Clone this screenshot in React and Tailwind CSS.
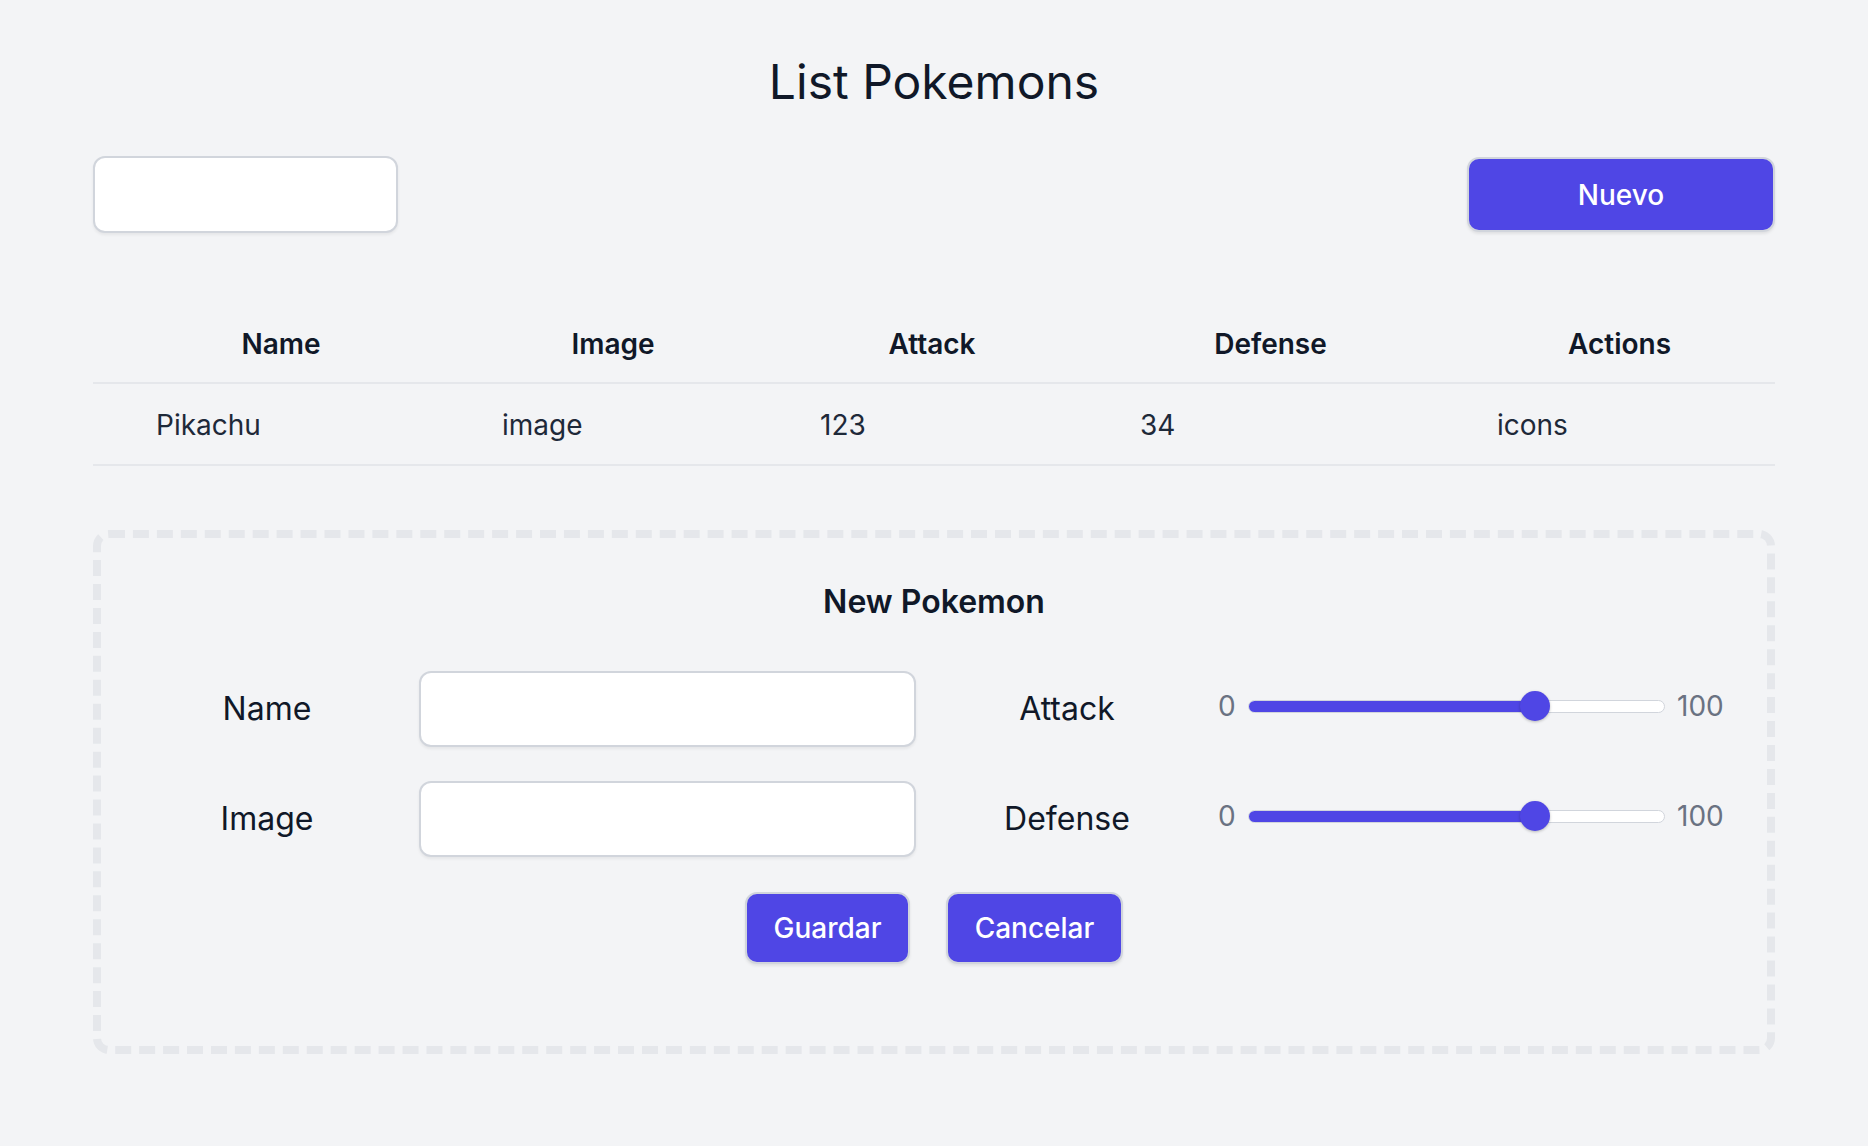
import React, { useState } from 'react';

const pokemons = [
    { name: 'Pikachu', image: 'image', attack: 123, defense: 34, actions: 'icons' }
];

const columns = ['Name', 'Image', 'Attack', 'Defense', 'Actions'];

const RangeField = ( { label, value } ) => (
    <div className="flex items-center">
        <div className="w-[302px] text-center text-[32px] leading-[40px] text-gray-900">{label}</div>
        {/* slider sits a touch above the label line */}
        <div className="mb-[6px] flex items-center">
            <span className="w-[30px] text-[28px] leading-[40px] text-gray-500">0</span>
            <div className="relative h-[13px] w-[417px] rounded-full border border-gray-300 bg-white">
                <div className="h-full rounded-full bg-[#4f46e5]" style={{ width: `${value}%` }}></div>
                <div
                    className="absolute top-1/2 h-[30px] w-[30px] -translate-x-1/2 -translate-y-1/2 rounded-full bg-[#4f46e5] shadow-[0_1px_3px_rgba(0,0,0,0.25)]"
                    style={{ left: `${value}%` }}
                ></div>
            </div>
            <span className="ml-[12px] text-[28px] leading-[40px] text-gray-500">100</span>
        </div>
    </div>
);

const App = () => {
    const [search, setSearch] = useState( '' );
    const [form, setForm] = useState( { name: '', image: '', attack: 69, defense: 69 } );

    const handleChange = ( field, value ) => {
        setForm( prev => ( { ...prev, [field]: value } ) );
    };

    return (
        <div className="min-h-screen w-full bg-gray-100 px-[93px] pt-[50px] pb-[80px] font-['Inter',sans-serif] text-gray-900">
            {/* Title */}
            <h1 className="text-center text-[48px] leading-[64px] font-normal text-gray-900">List Pokemons</h1>

            {/* Search + Nuevo */}
            <div className="mt-[42px] flex items-center justify-between">
                <input
                    type="text"
                    value={search}
                    onChange={( e ) => setSearch( e.target.value )}
                    className="h-[77px] w-[305px] rounded-[12px] border-2 border-gray-300 bg-white px-4 text-[28px] shadow-[0_2px_3px_rgba(0,0,0,0.06)] outline-none"
                />
                <button className="h-[75px] w-[308px] rounded-[12px] border-2 border-gray-300 bg-[#4f46e5] text-[28px] font-medium text-white shadow-[0_2px_3px_rgba(0,0,0,0.08)]">
                    Nuevo
                </button>
            </div>

            {/* Table */}
            <div className="mt-[73px]">
                <div className="grid h-[78px] grid-cols-[346px_318px_320px_357px_341px] items-center border-b-2 border-gray-200">
                    {columns.map( col => (
                        <div key={col} className="pl-[30px] text-center text-[28px] leading-[40px] font-semibold">{col}</div>
                    ) )}
                </div>
                {pokemons.map( p => (
                    <div key={p.name} className="grid h-[82px] grid-cols-[346px_318px_320px_357px_341px] items-center border-b-2 border-gray-200 pt-[2px] text-[28px] leading-[40px] text-gray-800">
                        <div className="pl-[63px]">{p.name}</div>
                        <div className="pl-[63px]">{p.image}</div>
                        <div className="pl-[63px]">{p.attack}</div>
                        <div className="pl-[63px]">{p.defense}</div>
                        <div className="pl-[63px]">{p.actions}</div>
                    </div>
                ) )}
            </div>

            {/* New Pokemon form */}
            <div className="mt-[64px] rounded-[16px] border-[8px] border-dashed border-gray-200 pt-[44px] pb-[82px]">
                <h2 className="text-center text-[32px] leading-[40px] font-semibold">New Pokemon</h2>

                <div className="mt-[49px] flex flex-col gap-[34px]">
                    <div className="flex items-center">
                        <div className="w-[318px] pl-[14px] text-center text-[32px] leading-[40px]">Name</div>
                        <input
                            type="text"
                            value={form.name}
                            onChange={( e ) => handleChange( 'name', e.target.value )}
                            className="h-[76px] w-[497px] rounded-[12px] border-2 border-gray-300 bg-white px-4 text-[28px] shadow-[0_2px_3px_rgba(0,0,0,0.06)] outline-none"
                        />
                        <RangeField label="Attack" value={form.attack} />
                    </div>
                    <div className="flex items-center">
                        <div className="w-[318px] pl-[14px] text-center text-[32px] leading-[40px]">Image</div>
                        <input
                            type="text"
                            value={form.image}
                            onChange={( e ) => handleChange( 'image', e.target.value )}
                            className="h-[76px] w-[497px] rounded-[12px] border-2 border-gray-300 bg-white px-4 text-[28px] shadow-[0_2px_3px_rgba(0,0,0,0.06)] outline-none"
                        />
                        <RangeField label="Defense" value={form.defense} />
                    </div>
                </div>

                <div className="mt-[35px] flex justify-center gap-[36px]">
                    <button className="h-[72px] w-[165px] rounded-[12px] border-2 border-gray-300 bg-[#4f46e5] text-[28px] font-medium text-white shadow-[0_2px_3px_rgba(0,0,0,0.08)]">
                        Guardar
                    </button>
                    <button className="h-[72px] w-[177px] rounded-[12px] border-2 border-gray-300 bg-[#4f46e5] text-[28px] font-medium text-white shadow-[0_2px_3px_rgba(0,0,0,0.08)]">
                        Cancelar
                    </button>
                </div>
            </div>
        </div>
    );
};

export default App;
